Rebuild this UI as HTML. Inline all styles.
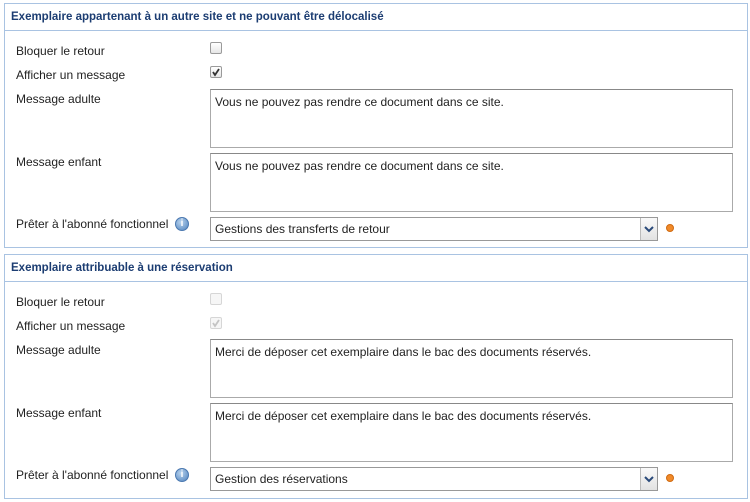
<!DOCTYPE html>
<html><head><meta charset="utf-8"><style>
body{margin:0;width:750px;height:502px;background:#fff;font-family:"Liberation Sans",Arial,sans-serif;font-size:12px;color:#222;position:relative;overflow:hidden}
.p{position:absolute;left:4px;width:742px;border:1px solid #a9c3e2;background:#fff}
.h{position:absolute;left:0;top:0;width:742px;height:26px;border-bottom:1px solid #a9c3e2;}
.h span{position:absolute;left:6px;top:7px;font-weight:bold;font-size:11.5px;color:#1c3d72}
.l{position:absolute;left:11px}
.cb{position:absolute;left:205px;width:10px;height:10px;border:1px solid #9a9a9a;border-radius:2px;background:linear-gradient(#fff,#e6e6e6)}
.cb.d{border-color:#d6d6d6;background:#f6f6f6}
.ta{position:absolute;left:205px;width:521px;height:57px;border:1px solid #aaa;border-top-color:#888}
.ta span{position:absolute;left:4px;top:5px}
.sel{position:absolute;left:205px;width:446px;height:22px;border:1px solid #999}
.sel span{position:absolute;left:4px;top:4px}
.arr{position:absolute;right:0;top:0;width:16px;height:22px;border-left:1px solid #bbb;background:linear-gradient(#fafafa,#e2e2e2)}
.info{position:absolute;left:170px;width:12px;height:12px;border-radius:50%;background:radial-gradient(circle at 40% 35%,#b8d3ee,#4f82bd);border:1px solid #4a78b0;color:#fff;font-size:10px;font-weight:bold;text-align:center;line-height:12px}
.dot{position:absolute;left:661px;width:6px;height:6px;border-radius:50%;background:#f08a2a;border:1px solid #d06a10}
</style></head><body>
<div class="p" style="top:3px;height:243px">
<div class="h"><span>Exemplaire appartenant à un autre site et ne pouvant être délocalisé</span></div>
<div class="l" style="top:40px">Bloquer le retour</div>
<div class="cb" style="top:38px"></div>
<div class="l" style="top:64px">Afficher un message</div>
<div class="cb" style="top:62px"><svg width="10" height="10" style="position:absolute;left:0;top:0"><path d="M2 5 L4 8 L8 2" stroke="#333" stroke-width="1.8" fill="none"/></svg></div>
<div class="l" style="top:88px">Message adulte</div>
<div class="ta" style="top:85px"><span>Vous ne pouvez pas rendre ce document dans ce site.</span></div>
<div class="l" style="top:151px">Message enfant</div>
<div class="ta" style="top:149px"><span>Vous ne pouvez pas rendre ce document dans ce site.</span></div>
<div class="l" style="top:213px">Prêter à l'abonné fonctionnel</div>
<div class="info" style="top:213px">i</div>
<div class="sel" style="top:213px"><span>Gestions des transferts de retour</span><div class="arr"><svg width="16" height="22"><path d="M4 9 L8 13 L12 9" stroke="#2a4a7a" stroke-width="2" fill="none"/></svg></div></div>
<div class="dot" style="top:220px"></div>
</div>
<div class="p" style="top:254px;height:243px">
<div class="h"><span>Exemplaire attribuable à une réservation</span></div>
<div class="l" style="top:40px">Bloquer le retour</div>
<div class="cb d" style="top:38px"></div>
<div class="l" style="top:64px">Afficher un message</div>
<div class="cb d" style="top:62px"><svg width="10" height="10" style="position:absolute;left:0;top:0"><path d="M2 5 L4 8 L8 2" stroke="#c4c4c4" stroke-width="1.8" fill="none"/></svg></div>
<div class="l" style="top:88px">Message adulte</div>
<div class="ta" style="top:84px"><span>Merci de déposer cet exemplaire dans le bac des documents réservés.</span></div>
<div class="l" style="top:151px">Message enfant</div>
<div class="ta" style="top:148px"><span>Merci de déposer cet exemplaire dans le bac des documents réservés.</span></div>
<div class="l" style="top:213px">Prêter à l'abonné fonctionnel</div>
<div class="info" style="top:213px">i</div>
<div class="sel" style="top:212px"><span>Gestion des réservations</span><div class="arr"><svg width="16" height="22"><path d="M4 9 L8 13 L12 9" stroke="#2a4a7a" stroke-width="2" fill="none"/></svg></div></div>
<div class="dot" style="top:219px"></div>
</div>
</body></html>
